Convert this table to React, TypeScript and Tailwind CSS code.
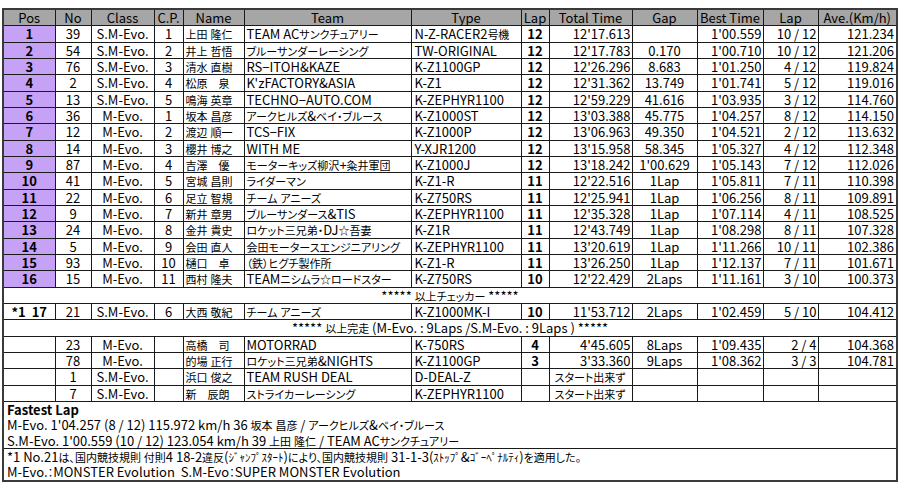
const rows = [
  ["1", "39", "S.M-Evo.", "1", "上田 隆仁", "TEAM ACサンクチュアリー", "N-Z-RACER2号機", "12", "12'17.613", "", "1'00.559", "10 / 12", "121.234"],
  ["2", "54", "S.M-Evo.", "2", "井上 哲悟", "ブルーサンダーレーシング", "TW-ORIGINAL", "12", "12'17.783", "0.170", "1'00.710", "10 / 12", "121.206"],
  ["3", "76", "S.M-Evo.", "3", "清水 直樹", "RS−ITOH&KAZE", "K-Z1100GP", "12", "12'26.296", "8.683", "1'01.250", "4 / 12", "119.824"],
  ["4", "2", "S.M-Evo.", "4", "松原　泉", "K'zFACTORY&ASIA", "K-Z1", "12", "12'31.362", "13.749", "1'01.741", "5 / 12", "119.016"],
  ["5", "13", "S.M-Evo.", "5", "鳴海 英章", "TECHNO−AUTO.COM", "K-ZEPHYR1100", "12", "12'59.229", "41.616", "1'03.935", "3 / 12", "114.760"],
  ["6", "36", "M-Evo.", "1", "坂本 昌彦", "アークヒルズ&ベイ・ブルース", "K-Z1000ST", "12", "13'03.388", "45.775", "1'04.257", "8 / 12", "114.150"],
  ["7", "12", "M-Evo.", "2", "渡辺 順一", "TCS−FIX", "K-Z1000P", "12", "13'06.963", "49.350", "1'04.521", "2 / 12", "113.632"],
  ["8", "14", "M-Evo.", "3", "櫻井 博之", "WITH ME", "Y-XJR1200", "12", "13'15.958", "58.345", "1'05.327", "4 / 12", "112.348"],
  ["9", "87", "M-Evo.", "4", "吉澤　優", "モーターキッズ柳沢+粂井軍団", "K-Z1000J", "12", "13'18.242", "1'00.629", "1'05.143", "7 / 12", "112.026"],
  ["10", "41", "M-Evo.", "5", "宮城 昌則", "ライダーマン", "K-Z1-R", "11", "12'22.516", "1Lap", "1'05.811", "7 / 11", "110.398"],
  ["11", "22", "M-Evo.", "6", "足立 智規", "チーム アニーズ", "K-Z750RS", "11", "12'25.941", "1Lap", "1'06.256", "8 / 11", "109.891"],
  ["12", "9", "M-Evo.", "7", "新井 章男", "ブルーサンダース&TIS", "K-ZEPHYR1100", "11", "12'35.328", "1Lap", "1'07.114", "4 / 11", "108.525"],
  ["13", "24", "M-Evo.", "8", "金井 貴史", "ロケット三兄弟・DJ☆吾妻", "K-Z1R", "11", "12'43.749", "1Lap", "1'08.298", "8 / 11", "107.328"],
  ["14", "5", "M-Evo.", "9", "会田 直人", "会田モータースエンジニアリング", "K-ZEPHYR1100", "11", "13'20.619", "1Lap", "1'11.266", "10 / 11", "102.386"],
  ["15", "93", "M-Evo.", "10", "樋口　卓", "（鉄）ヒグチ製作所", "K-Z1-R", "11", "13'26.250", "1Lap", "1'12.137", "7 / 11", "101.671"],
  ["16", "15", "M-Evo.", "11", "西村 隆夫", "TEAMニシムラ☆ロードスター", "K-Z750RS", "10", "12'22.429", "2Laps", "1'11.161", "3 / 10", "100.373"],
];

const penalty = ["*1  17", "21", "S.M-Evo.", "6", "大西 敬紀", "チーム アニーズ", "K-Z1000MK-I", "10", "11'53.712", "2Laps", "1'02.459", "5 / 10", "104.412"];

const others = [
  ["", "23", "M-Evo.", "", "高橋　司", "MOTORRAD", "K-750RS", "4", "4'45.605", "8Laps", "1'09.435", "2 / 4", "104.368"],
  ["", "78", "M-Evo.", "", "的場 正行", "ロケット三兄弟&NIGHTS", "K-Z1100GP", "3", "3'33.360", "9Laps", "1'08.362", "3 / 3", "104.781"],
  ["", "1", "S.M-Evo.", "", "浜口 俊之", "TEAM RUSH DEAL", "D-DEAL-Z", "", "スタート出来ず", "", "", "", ""],
  ["", "7", "S.M-Evo.", "", "新　辰朗", "ストライカーレーシング", "K-ZEPHYR1100", "", "スタート出来ず", "", "", "", ""],
];

const headers = ["Pos", "No", "Class", "C.P.", "Name", "Team", "Type", "Lap", "Total Time", "Gap", "Best Time", "Lap", "Ave.(Km/h)"];
const widths = ["w-[52px]", "w-[36px]", "w-[63px]", "w-[29px]", "w-[61px]", "w-[167px]", "w-[110px]", "w-[28px]", "w-[83px]", "w-[65px]", "w-[66px]", "w-[55px]", "w-[79px]"];

// per-column alignment of the body cells
const align = [
  "text-center font-bold",
  "text-center",
  "text-center",
  "text-center",
  "text-left pl-[2px]",
  "text-left pl-[2px]",
  "text-left pl-[3px]",
  "text-center font-bold",
  "text-right pr-[1px]",
  "text-center",
  "text-right pr-[1px]",
  "text-right pr-[1px]",
  "text-right pr-[2px]",
];

const cell = "border border-[#1a1a1a] h-[16.33px] p-0 whitespace-pre";
const line = "h-[15.33px] leading-[15.33px]";

// japanese runs are set a little smaller than the latin ones, like the sheet
const CJK = /([\u3000-\u30ff\u3400-\u9fff\uff01-\uffef\u2606]+)/;
const T = ({ s }: { s: string }) => (
  <>
    {s.split(CJK).map((part, i) =>
      i % 2 === 1 ? (
        <span key={i} className="text-[11px] [font-feature-settings:'palt']">
          {part}
        </span>
      ) : (
        part
      )
    )}
  </>
);

const DataRow = ({ r, purple }: { r: string[]; purple: boolean }) => (
  <tr>
    {r.map((v, i) => (
      <td
        key={i}
        className={`${cell} ${align[i]} ${i === 0 && purple ? "bg-[#c6a2f6]" : "bg-white"} ${i === 8 && v.startsWith("ス") ? "!text-center" : ""}`}
      >
        <div className={line}>
          <T s={v} />
        </div>
      </td>
    ))}
  </tr>
);

const SpanRow = ({ text }: { text: string }) => (
  <tr>
    <td colSpan={13} className={`${cell} text-center`}>
      <div className={line}>
        <T s={text} />
      </div>
    </td>
  </tr>
);

export default function App() {
  return (
    <div className="bg-white w-[900px] h-[487px] pt-[8px] pl-[2px] font-['Noto_Sans_CJK_JP',sans-serif] text-[13px] text-black">
      <table className="table-fixed border-collapse border-2 border-[#3a3a3a] w-[895px]">
        <colgroup>
          {widths.map((w, i) => (
            <col key={i} className={w} />
          ))}
        </colgroup>
        <tbody>
          <tr>
            {headers.map((h, i) => (
              <td key={i} className={`${cell} bg-[#a6a6a6] text-center`}>
                <div className={line}>{h}</div>
              </td>
            ))}
          </tr>
          {rows.map((r) => (
            <DataRow key={r[0]} r={r} purple />
          ))}
          <SpanRow text="***** 以上チェッカー *****" />
          <DataRow r={penalty} purple={false} />
          <SpanRow text="***** 以上完走 (M-Evo. : 9Laps /S.M-Evo. : 9Laps ) *****" />
          {others.map((r) => (
            <DataRow key={r[1]} r={r} purple={false} />
          ))}
          <tr>
            <td colSpan={13} className="border border-[#1a1a1a] p-0 pl-[3px] whitespace-pre">
              <div className={`${line} font-bold`}>Fastest Lap</div>
              <div className={line}>
                <T s="M-Evo. 1'04.257 (8 / 12) 115.972 km/h 36 坂本 昌彦 / アークヒルズ&ベイ・ブルース" />
              </div>
              <div className={line}>
                <T s="S.M-Evo. 1'00.559 (10 / 12) 123.054 km/h 39 上田 隆仁 / TEAM ACサンクチュアリー" />
              </div>
            </td>
          </tr>
          <tr>
            <td colSpan={13} className="border border-[#1a1a1a] p-0 pl-[3px] whitespace-pre">
              <div className={line}>
                <T s="*1 No.21は、国内競技規則 付則4 18-2違反(ｼﾞｬﾝﾌﾟｽﾀｰﾄ)により、国内競技規則 31-1-3(ｽﾄｯﾌﾟ&ｺﾞｰﾍﾟﾅﾙﾃｨ)を適用した。" />
              </div>
              <div className={line}>
                <T s="M-Evo.：MONSTER Evolution  S.M-Evo：SUPER MONSTER Evolution" />
              </div>
            </td>
          </tr>
        </tbody>
      </table>
    </div>
  );
}
